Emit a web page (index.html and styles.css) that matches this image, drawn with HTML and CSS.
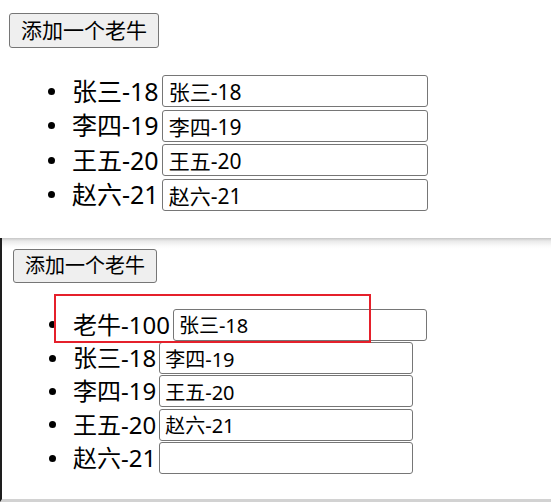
FILE: index.html
```html
<!DOCTYPE html>
<html lang="zh">
<head>
<meta charset="utf-8">
<title>添加一个老牛</title>
<link rel="stylesheet" href="styles.css">
</head>
<body>
  <section class="panel panel-top">
    <button class="add-btn">添加一个老牛</button>
    <ul class="people">
      <li class="row"><span class="name">张三-18</span><input class="field" type="text" value="张三-18"></li>
      <li class="row"><span class="name">李四-19</span><input class="field" type="text" value="李四-19"></li>
      <li class="row"><span class="name">王五-20</span><input class="field" type="text" value="王五-20"></li>
      <li class="row"><span class="name">赵六-21</span><input class="field" type="text" value="赵六-21"></li>
    </ul>
  </section>
  <section class="panel panel-bottom">
    <button class="add-btn">添加一个老牛</button>
    <ul class="people">
      <li class="row"><span class="name">老牛-100</span><input class="field" type="text" value="张三-18"></li>
      <li class="row"><span class="name">张三-18</span><input class="field" type="text" value="李四-19"></li>
      <li class="row"><span class="name">李四-19</span><input class="field" type="text" value="王五-20"></li>
      <li class="row"><span class="name">王五-20</span><input class="field" type="text" value="赵六-21"></li>
      <li class="row"><span class="name">赵六-21</span><input class="field" type="text" value=""></li>
    </ul>
    <div class="highlight"></div>
  </section>
</body>
</html>
```

FILE: styles.css
```css
html, body {
  margin: 0;
  padding: 0;
  background: #ffffff;
}

body {
  width: 551px;
  height: 502px;
  overflow: hidden;
  font-family: "Noto Sans", "Noto Sans CJK SC", sans-serif;
  color: #000;
}

.panel {
  box-sizing: border-box;
  position: relative;
}

.add-btn {
  display: block;
  box-sizing: border-box;
  margin: 0;
  background: #efefef;
  border: 1px solid #767676;
  border-radius: 3px;
  color: #000;
  font-family: "Noto Sans", "Noto Sans CJK SC", sans-serif;
  line-height: 1;
  white-space: nowrap;
}

.people {
  list-style: none;
  margin: 0;
}

.row {
  display: flex;
  align-items: center;
}

.row::before {
  content: "";
  flex: 0 0 auto;
  width: 7px;
  height: 7px;
  border-radius: 50%;
  background: #000;
  margin-right: 17px;
}

.name {
  white-space: nowrap;
  line-height: 1;
}

.field {
  box-sizing: border-box;
  margin: 0 0 0 3px;
  border: 1px solid #767676;
  border-radius: 3px;
  background: #fff;
  color: #000;
  font-family: "Noto Sans", "Noto Sans CJK SC", sans-serif;
  outline: none;
}

/* top capture */
.panel-top {
  height: 238px;
  padding: 13px 0 0 9px;
}

.panel-top .add-btn {
  width: 150px;
  height: 35px;
  padding: 0 11px;
  font-size: 21px;
}

.panel-top .people {
  margin-top: 26px;
  padding-left: 39px;
}

.panel-top .row {
  height: 34.5px;
}

.panel-top .name {
  font-size: 25px;
}

.panel-top .field {
  width: 266px;
  height: 32px;
  padding: 0 6px;
  font-size: 21px;
}

/* bottom capture */
.panel-bottom {
  height: 264px;
  padding: 11px 0 0 11px;
  border-left: 2px solid #1e1e1e;
  border-bottom: 3px solid #d2d2d2;
  background: linear-gradient(to bottom, #c6c6c6 0px, #e9e9e9 3px, #fbfbfb 8px, #ffffff 11px);
}

.panel-bottom .add-btn {
  width: 144px;
  height: 34px;
  padding: 0 11px;
  font-size: 20px;
}

.panel-bottom .people {
  margin-top: 25px;
  padding-left: 36px;
}

.panel-bottom .row {
  height: 33.4px;
}

.panel-bottom .name {
  font-size: 24px;
}

.panel-bottom .field {
  width: 254px;
  height: 32px;
  padding: 0 5px;
  font-size: 20px;
}

.highlight {
  position: absolute;
  left: 52px;
  top: 56px;
  width: 317px;
  height: 49px;
  box-sizing: border-box;
  border: 2px solid #e5202b;
}
```
